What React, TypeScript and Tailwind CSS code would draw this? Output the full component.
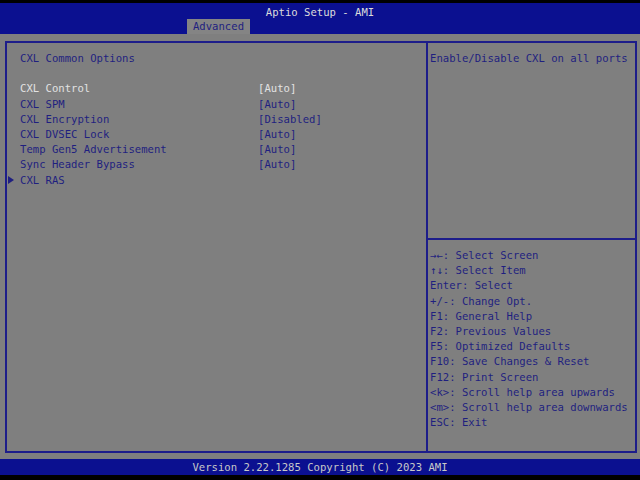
import React from 'react';

const items = [
  { label: 'CXL Control', value: '[Auto]', selected: true },
  { label: 'CXL SPM', value: '[Auto]' },
  { label: 'CXL Encryption', value: '[Disabled]' },
  { label: 'CXL DVSEC Lock', value: '[Auto]' },
  { label: 'Temp Gen5 Advertisement', value: '[Auto]' },
  { label: 'Sync Header Bypass', value: '[Auto]' },
];

const keys = [
  '→←: Select Screen',
  '↑↓: Select Item',
  'Enter: Select',
  '+/-: Change Opt.',
  'F1: General Help',
  'F2: Previous Values',
  'F5: Optimized Defaults',
  'F10: Save Changes & Reset',
  'F12: Print Screen',
  '<k>: Scroll help area upwards',
  '<m>: Scroll help area downwards',
  'ESC: Exit',
];

export default function App() {
  return (
    <div
      className="w-[640px] h-[480px] bg-black flex flex-col text-[10.6px] leading-[15.2px] overflow-hidden"
      style={{ fontFamily: '"DejaVu Sans Mono", "Liberation Mono", monospace' }}
    >
      <div className="h-[3px]" />

      {/* header */}
      <div className="h-[31px] bg-[#0b1090] flex flex-col">
        <div className="h-[16px] flex items-center justify-center text-[#dcdcdc] pt-[3px]">Aptio Setup - AMI</div>
        <div className="flex pl-[187px]">
          <div className="w-[63px] h-[15px] bg-[#848484] text-[#1f1f80] flex items-center justify-center pt-[1px]">
            Advanced
          </div>
        </div>
      </div>

      {/* body */}
      <div className="h-[425px] bg-[#7f7f7f] pt-[7px] pl-[5px] pr-[3px]">
        <div className="h-[412px] border-2 border-[#1d1d8a] flex">
          {/* left panel */}
          <div className="w-[421px] border-r-2 border-[#1d1d8a] pt-[8px] text-[#1f1f80]">
            <div className="pl-[13px]">CXL Common Options</div>
            <div className="h-[15.2px]" />
            {items.map((it) => (
              <div key={it.label} className={`flex ${it.selected ? 'text-[#e2e2e2]' : ''}`}>
                <div className="w-[13px]" />
                <div className="w-[238px]">{it.label}</div>
                <div>{it.value}</div>
              </div>
            ))}
            <div className="flex">
              <div className="w-[13px] flex items-center pl-[1px]">
                <svg width="6" height="8" viewBox="0 0 6 8">
                  <polygon points="0,0 6,4 0,8" fill="#1f1f80" />
                </svg>
              </div>
              <div>CXL RAS</div>
            </div>
          </div>

          {/* right panel */}
          <div className="flex-1 flex flex-col text-[#1f1f80]">
            <div className="h-[197px] pt-[8px] pl-[2px] border-b-2 border-[#1d1d8a]">
              Enable/Disable CXL on all ports
            </div>
            <div className="pt-[8px] pl-[2px]">
              {keys.map((k) => (
                <div key={k} className="whitespace-pre">{k}</div>
              ))}
            </div>
          </div>
        </div>
      </div>

      {/* footer */}
      <div className="h-[16px] bg-[#0b1090] text-[#c8c8c8] flex items-center justify-center pt-[1px]">
        Version 2.22.1285 Copyright (C) 2023 AMI
      </div>
      <div className="flex-1" />
    </div>
  );
}
